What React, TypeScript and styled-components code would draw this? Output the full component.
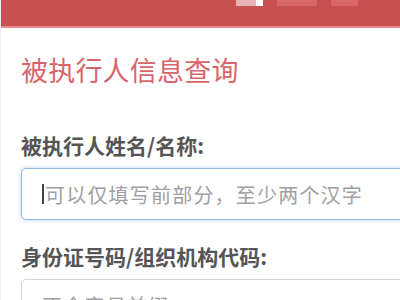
import styled, { createGlobalStyle } from "styled-components"

const Global = createGlobalStyle`
  html, body {
    margin: 0;
    padding: 0;
    background: #ffffff;
    overflow: hidden;
    font-family: "Noto Sans CJK SC", "Noto Sans", sans-serif;
  }
`

const Page = styled.div`
  width: 400px;
  height: 300px;
  overflow: hidden;
  border-left: 1px solid #f0f0f0;
  box-sizing: border-box;
`

const TopBar = styled.div`
  height: 28px;
  background: #c95051;
  border-bottom: 2px solid #e58a8c;
  box-sizing: border-box;
  display: flex;
  justify-content: flex-end;
  align-items: flex-start;
  padding-right: 42px;
  gap: 14px;
`

const Blip = styled.div<{ $w: number; $c: string }>`
  width: ${(p) => p.$w}px;
  height: 6px;
  background: ${(p) => p.$c};
  filter: blur(0.6px);
`

const BlipGroup = styled.div`
  display: flex;
`

const Main = styled.div`
  padding: 24px 0 0 20px;
`

const Title = styled.h1`
  margin: 0 0 43px;
  font-size: 27px;
  line-height: 36px;
  font-weight: 400;
  color: #d9646a;
  letter-spacing: 0.2px;
`

const Label = styled.div`
  font-size: 21px;
  line-height: 28px;
  font-weight: 700;
  color: #555555;
  margin-bottom: 9px;
`

const Field = styled.div<{ $focus?: boolean }>`
  width: 400px;
  height: 52px;
  box-sizing: border-box;
  border: 1px solid ${(p) => (p.$focus ? "#8fb9e3" : "#d6d6d6")};
  box-shadow: ${(p) => (p.$focus ? "0 0 4px rgba(102,160,230,0.45)" : "none")};
  border-radius: 5px;
  display: flex;
  align-items: center;
  padding-left: 20px;
  margin-bottom: 22px;
`

const Caret = styled.span`
  width: 2px;
  height: 20px;
  background: #444;
  margin-right: 1px;
`

const Placeholder = styled.span`
  font-size: 20px;
  color: #a0a0a0;
  white-space: nowrap;
  letter-spacing: 1.2px;
`

export default function App() {
  return (
    <>
      <Global />
      <Page>
        <TopBar>
          <BlipGroup>
            <Blip $w={20} $c="#e8b4b6" />
            <Blip $w={7} $c="#ffffff" />
          </BlipGroup>
          <Blip $w={40} $c="#d76668" />
          <Blip $w={27} $c="#d76668" />
        </TopBar>
        <Main>
          <Title>被执行人信息查询</Title>
          <Label>被执行人姓名/名称:</Label>
          <Field $focus>
            <Caret />
            <Placeholder>可以仅填写前部分，至少两个汉字</Placeholder>
          </Field>
          <Label>身份证号码/组织机构代码:</Label>
          <Field>
            <Placeholder>不含字母前缀</Placeholder>
          </Field>
        </Main>
      </Page>
    </>
  )
}
